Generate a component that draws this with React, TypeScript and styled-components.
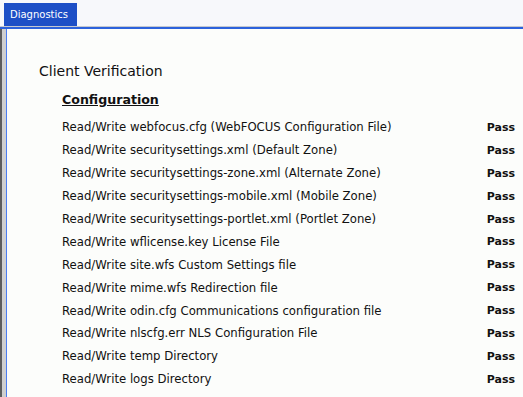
import React from 'react';
import styled, { createGlobalStyle } from 'styled-components';

const GlobalStyle = createGlobalStyle`
  html, body {
    margin: 0;
    padding: 0;
    background: #fbfcfa;
    overflow: hidden;
  }
`;

const Page = styled.div`
  width: 523px;
  height: 397px;
  display: flex;
  flex-direction: column;
  font-family: 'DejaVu Sans', 'Liberation Sans', sans-serif;
  color: #111;
`;

const TabBar = styled.div`
  display: flex;
  align-items: flex-end;
  height: 27px;
  padding-left: 4px;
  box-sizing: border-box;
  background: #f7f8fb;
  border-bottom: 1px solid #c4c8d0;
`;

const Tab = styled.div`
  height: 23px;
  display: flex;
  align-items: center;
  padding: 0 9px 0 6px;
  background: #1d4fc6;
  color: #fff;
  font-size: 10px;
`;

const Rule = styled.div`
  height: 2px;
  background: #2c62dc;
`;

const Frame = styled.div`
  flex: 1;
  display: flex;
  border-left: 2px solid #5c5c5c;
`;

const FrameInner = styled.div`
  flex: 1;
  display: flex;
  border-left: 4px solid #cfcfcf;
`;

const Content = styled.div`
  flex: 1;
  border-left: 1px solid #4a7cf0;
  background: #fcfdfb;
  padding: 31px 8px 0 32px;
`;

const Title = styled.div`
  font-size: 14px;
  height: 22px;
  line-height: 22px;
`;

const Section = styled.div`
  padding-left: 23px;
  margin-top: 6px;
`;

const SectionHead = styled.div`
  font-size: 12.6px;
  font-weight: bold;
  text-decoration: underline;
  height: 24px;
  line-height: 24px;
  margin-bottom: 4px;
`;

const Row = styled.div`
  display: flex;
  justify-content: space-between;
  align-items: center;
  height: 22.9px;
  font-size: 11.7px;
`;

const Result = styled.span`
  font-weight: bold;
  font-size: 11px;
`;

const checks = [
  'Read/Write webfocus.cfg (WebFOCUS Configuration File)',
  'Read/Write securitysettings.xml (Default Zone)',
  'Read/Write securitysettings-zone.xml (Alternate Zone)',
  'Read/Write securitysettings-mobile.xml (Mobile Zone)',
  'Read/Write securitysettings-portlet.xml (Portlet Zone)',
  'Read/Write wflicense.key License File',
  'Read/Write site.wfs Custom Settings file',
  'Read/Write mime.wfs Redirection file',
  'Read/Write odin.cfg Communications configuration file',
  'Read/Write nlscfg.err NLS Configuration File',
  'Read/Write temp Directory',
  'Read/Write logs Directory',
];

export default function App() {
  return (
    <Page>
      <GlobalStyle />
      <TabBar>
        <Tab>Diagnostics</Tab>
      </TabBar>
      <Rule />
      <Frame>
        <FrameInner>
          <Content>
            <Title>Client Verification</Title>
            <Section>
              <SectionHead>Configuration</SectionHead>
              {checks.map((c) => (
                <Row key={c}>
                  <span>{c}</span>
                  <Result>Pass</Result>
                </Row>
              ))}
            </Section>
          </Content>
        </FrameInner>
      </Frame>
    </Page>
  );
}
